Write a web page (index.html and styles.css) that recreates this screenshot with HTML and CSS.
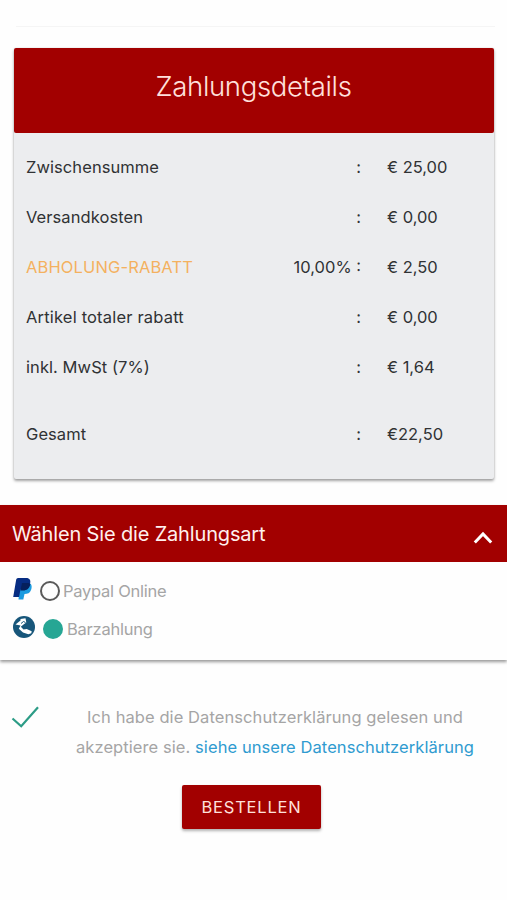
FILE: index.html
```html
<!DOCTYPE html>
<html lang="de">
<head>
<meta charset="utf-8">
<title>Zahlungsdetails</title>
<link rel="stylesheet" href="styles.css">
</head>
<body>
<hr class="divider">
<section class="summary">
  <h1 class="summary-title"><span>Zahlungsdetails</span></h1>
  <div class="rows">
    <div class="row"><span class="label">Zwischensumme</span><span class="mid">:</span><span class="amount">€ 25,00</span></div>
    <div class="row"><span class="label">Versandkosten</span><span class="mid">:</span><span class="amount">€ 0,00</span></div>
    <div class="row"><span class="label discount">ABHOLUNG-RABATT</span><span class="mid">10,00% :</span><span class="amount">€ 2,50</span></div>
    <div class="row"><span class="label wide">Artikel totaler rabatt</span><span class="mid">:</span><span class="amount">€ 0,00</span></div>
    <div class="row"><span class="label">inkl. MwSt (7%)</span><span class="mid">:</span><span class="amount">€ 1,64</span></div>
    <div class="row total"><span class="label">Gesamt</span><span class="mid">:</span><span class="amount">€22,50</span></div>
  </div>
</section>
<section class="payment">
  <h2 class="payment-head"><span>Wählen Sie die Zahlungsart</span>
    <svg class="chevron" viewBox="0 0 20 14" width="20" height="14"><path d="M1.800 11.500 10 3l8.200 8.500" fill="none" stroke="#fff" stroke-width="3"/></svg>
  </h2>
  <div class="option">
    <svg class="logo" viewBox="0 0 22 24" width="22" height="24">
      <path d="M7 6h9c3 1 3.200 4 2 7-1 3-3.500 4-6.500 4l-1.200 5.500H5.500z" fill="#1b9be0"/>
      <path d="M5 1H13c4 0 5 2.500 4 6-1 4-3.500 5.500-7 5.500H7.500L6 20H.2L3.200 2.500Q3.500 1 5 1z" fill="#062c82"/>
      <path d="M7.500 13.500 9 6h6.500l1.800 1c-.7 4.500-3.500 6.500-7.300 6.500z" fill="#05205c"/>
    </svg>
    <span class="radio"></span><span class="option-name">Paypal Online</span>
  </div>
  <div class="option cash">
    <svg class="logo" viewBox="0 0 22 22" width="22" height="22">
      <circle cx="11" cy="11" r="11" fill="#17567a"/>
      <path d="M2.500 8.500 7.500 4.500V3l5-.8.8 4.300-2.800 2-2.700 2.200 2.700 2.800 3.200-.5 5 2.300-.4 2-3 .9-5.300-1.600-4.200-3.800 1.700-3.400z" fill="#fff"/>
      <path d="m8 7.500 2.500-2 2 1" fill="none" stroke="#17567a" stroke-width="1"/>
    </svg>
    <span class="radio checked"></span><span class="option-name">Barzahlung</span>
  </div>
</section>
<div class="consent">
  <svg class="tick" viewBox="0 0 28 22" width="28" height="22"><path d="M1.500 12.500 10.200 20.300 27 1.300" fill="none" stroke="#2c9c86" stroke-width="2.200"/></svg>
  <p class="consent-text"><span class="line1">Ich habe die Datenschutzerklärung gelesen und</span><br><span class="line2">akzeptiere sie. <a class="link">siehe unsere Datenschutzerklärung</a></span></p>
</div>
<button class="submit">BESTELLEN</button>
</body>
</html>
```
FILE: styles.css
```css
* { box-sizing: border-box; }
body {
  margin: 0;
  padding-top: 26px;
  min-height: 900px;
  background: #fefefe;
  font-family: Inter, "Liberation Sans", sans-serif;
  font-size: 16.5px;
  color: #303234;
}
.divider {
  height: 1px;
  margin: 0 12px 21px 16px;
  border: 0;
  background: #f5f5f5;
}
.summary {
  height: 431px;
  margin: 0 13px 0 14px;
  background: #ecedef;
  border-radius: 2px;
  box-shadow: 0 2px 3px rgba(0, 0, 0, .36), 0 0 2px rgba(0, 0, 0, .12);
}
.summary-title {
  display: flex;
  justify-content: center;
  height: 85px;
  margin: 0;
  padding: 21px 1px 0 0;
  background: #a20000;
  border-radius: 2px;
  color: #ffe0dc;
  font-size: 27.5px;
  font-weight: 300;
  letter-spacing: -.33px;
  line-height: 34px;
}
.rows { padding: 9px 12px 0; }
.row {
  display: grid;
  grid-template-columns: 200px 135px 1fr;
  height: 50px;
  align-items: center;
}
.total { height: 84px; }
.label { letter-spacing: .07px; }
.wide { letter-spacing: .18px; }
.mid { text-align: right; }
.amount { padding-left: 26px; }
.discount { color: #f4b15f; letter-spacing: .13px; }
.payment {
  height: 155px;
  margin-top: 26px;
  box-shadow: 0 2px 3px rgba(0, 0, 0, .4);
}
.payment-head {
  display: flex;
  justify-content: space-between;
  height: 57px;
  margin: 0;
  padding: 0 14px 0 12px;
  background: #a20000;
  color: #fff0ee;
  font-size: 20px;
  font-weight: 400;
  letter-spacing: -.16px;
  line-height: 58px;
}
.chevron { margin-top: 26px; }
.option {
  display: flex;
  align-items: center;
  height: 38px;
  margin-top: 9px;
  padding-left: 13px;
  color: #a5a5a5;
  letter-spacing: -.25px;
}
.cash { margin-top: 0; }
.option-name { padding-top: 2px; }
.logo { margin-top: -2px; }
.radio {
  width: 20px;
  height: 20px;
  margin: 1px 3px 0 5px;
  border: 2.5px solid #5a5a5a;
  border-radius: 50%;
}
.checked { margin-left: 8px; margin-right: 4px; border: 0; background: #26a694; }
.consent {
  display: flex;
  height: 108px;
  padding: 42px 0 0 11px;
  color: #a5a5a5;
}
.tick { margin-top: 4px; }
.consent-text {
  width: 400px;
  margin: 0 0 0 36px;
  letter-spacing: .08px;
  line-height: 30px;
  text-align: center;
  white-space: nowrap;
}
.link { color: #2f9bd0; }
.submit {
  display: block;
  width: 139px;
  height: 44px;
  margin: 17px 0 0 182px;
  padding: 0;
  border: 0;
  border-radius: 2px;
  background: #a20000;
  box-shadow: 0 2px 3px rgba(0, 0, 0, .3);
  color: #ffe0dc;
  font: 400 16.5px/44px Inter, sans-serif;
  letter-spacing: .8px;
}
```
